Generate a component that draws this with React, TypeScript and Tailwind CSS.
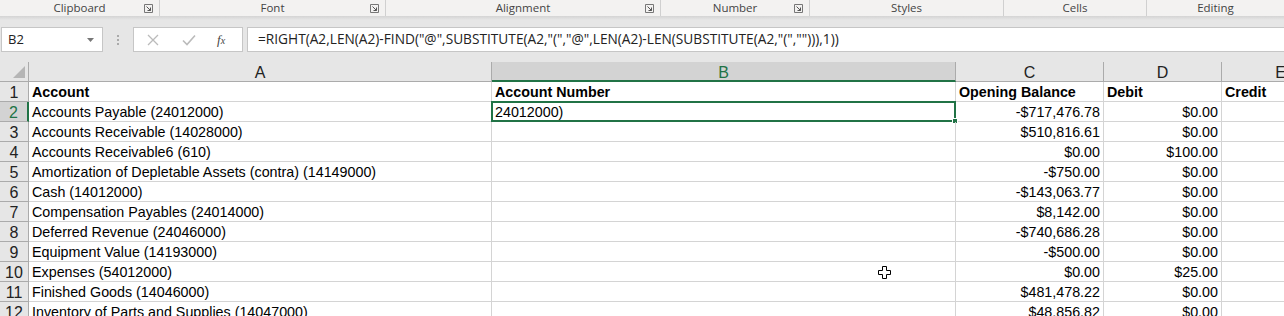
const groups = [
  { label: "Clipboard", w: 160, launcher: true },
  { label: "Font", w: 226, launcher: true },
  { label: "Alignment", w: 275, launcher: true },
  { label: "Number", w: 149, launcher: true },
  { label: "Styles", w: 194, launcher: false },
  { label: "Cells", w: 143, launcher: false },
  { label: "Editing", w: 137, launcher: false },
];

const rows: [string, string, string, string][] = [
  ["Accounts Payable (24012000)", "24012000)", "-$717,476.78", "$0.00"],
  ["Accounts Receivable (14028000)", "", "$510,816.61", "$0.00"],
  ["Accounts Receivable6 (610)", "", "$0.00", "$100.00"],
  ["Amortization of Depletable Assets (contra) (14149000)", "", "-$750.00", "$0.00"],
  ["Cash (14012000)", "", "-$143,063.77", "$0.00"],
  ["Compensation Payables (24014000)", "", "$8,142.00", "$0.00"],
  ["Deferred Revenue (24046000)", "", "-$740,686.28", "$0.00"],
  ["Equipment Value (14193000)", "", "-$500.00", "$0.00"],
  ["Expenses (54012000)", "", "$0.00", "$25.00"],
  ["Finished Goods (14046000)", "", "$481,478.22", "$0.00"],
  ["Inventory of Parts and Supplies (14047000)", "", "$48,856.82", "$0.00"],
];

const ui = { fontFamily: '"Open Sans", "Noto Sans", sans-serif' };
const arial = { fontFamily: '"Liberation Sans", Arial, sans-serif' };

function Launcher() {
  return (
    <svg width="9" height="9" viewBox="0 0 9 9" className="shrink-0">
      <path d="M0.5 0.5h8v8h-8z" fill="none" stroke="#777" />
      <path d="M2.5 2.5l4 4M6.5 3.5v3h-3" fill="none" stroke="#555" />
    </svg>
  );
}

function Ribbon() {
  return (
    <div className="flex h-[16px] bg-[#f3f2f1] text-[11.5px] text-[#444]" style={ui}>
      {groups.map((g, i) => (
        <div
          key={g.label}
          className={`relative flex items-center justify-center ${i < groups.length - 1 ? "border-r border-[#d0d0d0]" : ""}`}
          style={{ width: g.w }}
        >
          <span className="leading-none">{g.label}</span>
          {g.launcher && (
            <span className="absolute right-[6px] top-[4px]">
              <Launcher />
            </span>
          )}
        </div>
      ))}
    </div>
  );
}

function FormulaBar() {
  return (
    <div className="flex h-[42px] items-start bg-[#e6e6e6] pt-[7px]" style={ui}>
      <div className="ml-[1px] flex h-[25px] w-[102px] items-center justify-between border border-[#c6c6c6] bg-white pl-[6px] pr-[8px] text-[13px] text-[#222]">
        <span>B2</span>
        <svg width="7" height="4" viewBox="0 0 7 4">
          <path d="M0 0h7L3.5 4z" fill="#777" />
        </svg>
      </div>
      <div className="flex h-[25px] w-[30px] flex-col items-center justify-center gap-[2px]">
        <span className="h-[2px] w-[2px] bg-[#aaa]" />
        <span className="h-[2px] w-[2px] bg-[#aaa]" />
        <span className="h-[2px] w-[2px] bg-[#aaa]" />
      </div>
      <div className="flex h-[25px] w-[110px] items-center border border-[#c6c6c6] bg-white">
        <svg width="12" height="12" viewBox="0 0 12 12" className="ml-[13px]">
          <path d="M1 1l10 10M11 1L1 11" stroke="#bbb" strokeWidth="1.3" />
        </svg>
        <svg width="14" height="12" viewBox="0 0 14 12" className="ml-[23px]">
          <path d="M1 6.5l4 4L13 1.5" fill="none" stroke="#bbb" strokeWidth="1.6" />
        </svg>
        <span
          className="ml-[21px] text-[13px] italic text-[#444]"
          style={{ fontFamily: '"Liberation Serif", serif' }}
        >
          f<span className="text-[10px]">x</span>
        </span>
      </div>
      <div className="ml-[4px] flex h-[25px] flex-1 items-center border border-r-0 border-[#c6c6c6] bg-white pl-[10px] text-[13.7px] text-[#222]">
        =RIGHT(A2,LEN(A2)-FIND("@",SUBSTITUTE(A2,"(","@",LEN(A2)-LEN(SUBSTITUTE(A2,"(",""))),1))
      </div>
    </div>
  );
}

// column E runs past the window edge, as in the screenshot
const cols = "w-[1340px] grid-cols-[29px_463px_464px_148px_118px_118px]";

function Header() {
  const letters = ["A", "B", "C", "D", "E"];
  return (
    <div className={`grid h-[20px] ${cols} bg-[#e6e6e6] text-[16px] text-[#222]`} style={arial}>
      <div className="relative border-r border-b border-[#ababab]">
        <svg width="12" height="12" viewBox="0 0 12 12" className="absolute right-[3px] bottom-[3px]">
          <path d="M12 0v12H0z" fill="#b5b5b5" />
        </svg>
      </div>
      {letters.map((l) => (
        <div
          key={l}
          className={`flex items-center justify-center overflow-hidden pt-[3px] leading-none ${
            l === "B"
              ? "border-r border-b-2 border-r-[#ababab] border-b-[#217346] bg-[#d3d3d3] text-[#217346]"
              : "border-r border-b border-[#ababab]"
          }`}
        >
          {l}
        </div>
      ))}
    </div>
  );
}

function Row({ n, cells, bold, selected }: { n: number; cells: string[]; bold?: boolean; selected?: boolean }) {
  const num = bold ? "" : "text-right";
  return (
    <div className={`grid h-[20px] ${cols} text-[14.3px] text-black ${bold ? "font-bold" : ""}`} style={arial}>
      <div
        className={`flex items-center justify-center pt-[2px] font-normal text-[16px] leading-none ${
          selected
            ? "border-r-2 border-b border-r-[#217346] border-b-[#ababab] bg-[#d3d3d3] text-[#217346]"
            : "border-r border-b border-[#ababab] bg-[#e6e6e6] text-[#222]"
        }`}
      >
        {n}
      </div>
      <div className="overflow-visible whitespace-nowrap border-r border-b border-[#d4d4d4] px-[3px] pt-[1px] leading-[18px]">{cells[0]}</div>
      <div className="relative whitespace-nowrap border-r border-b border-[#d4d4d4] px-[3px] pt-[1px] leading-[18px]">
        {cells[1]}
        {selected && (
          <div className="absolute -left-[1px] -top-[1px] -right-[1px] -bottom-[1px] border-2 border-[#217346]">
            <span className="absolute -right-[4px] -bottom-[4px] h-[6px] w-[6px] border border-white bg-[#217346]" />
          </div>
        )}
      </div>
      <div className={`whitespace-nowrap border-r border-b border-[#d4d4d4] px-[3px] pt-[1px] leading-[18px] ${num}`}>{cells[2]}</div>
      <div className={`whitespace-nowrap border-r border-b border-[#d4d4d4] px-[3px] pt-[1px] leading-[18px] ${num}`}>{cells[3]}</div>
      <div className="whitespace-nowrap border-r border-b border-[#d4d4d4] px-[3px] pt-[1px] leading-[18px]">{cells[4]}</div>
    </div>
  );
}

export default function App() {
  return (
    <div className="relative h-[316px] w-[1284px] overflow-hidden bg-white">
      <Ribbon />
      <div className="h-[4px] bg-gradient-to-b from-[#d4d4d4] to-[#e6e6e6]" />
      <FormulaBar />
      <Header />
      <Row n={1} cells={["Account", "Account Number", "Opening Balance", "Debit", "Credit"]} bold />
      {rows.map((r, i) => (
        <Row key={i} n={i + 2} cells={[r[0], r[1], r[2], r[3], ""]} selected={i === 0} />
      ))}
      <svg width="13" height="13" viewBox="0 0 13 13" className="absolute left-[878px] top-[266px]">
        <path d="M4.5 0.5h4v4h4v4h-4v4h-4v-4h-4v-4h4z" fill="white" stroke="black" strokeWidth="1" />
      </svg>
    </div>
  );
}
